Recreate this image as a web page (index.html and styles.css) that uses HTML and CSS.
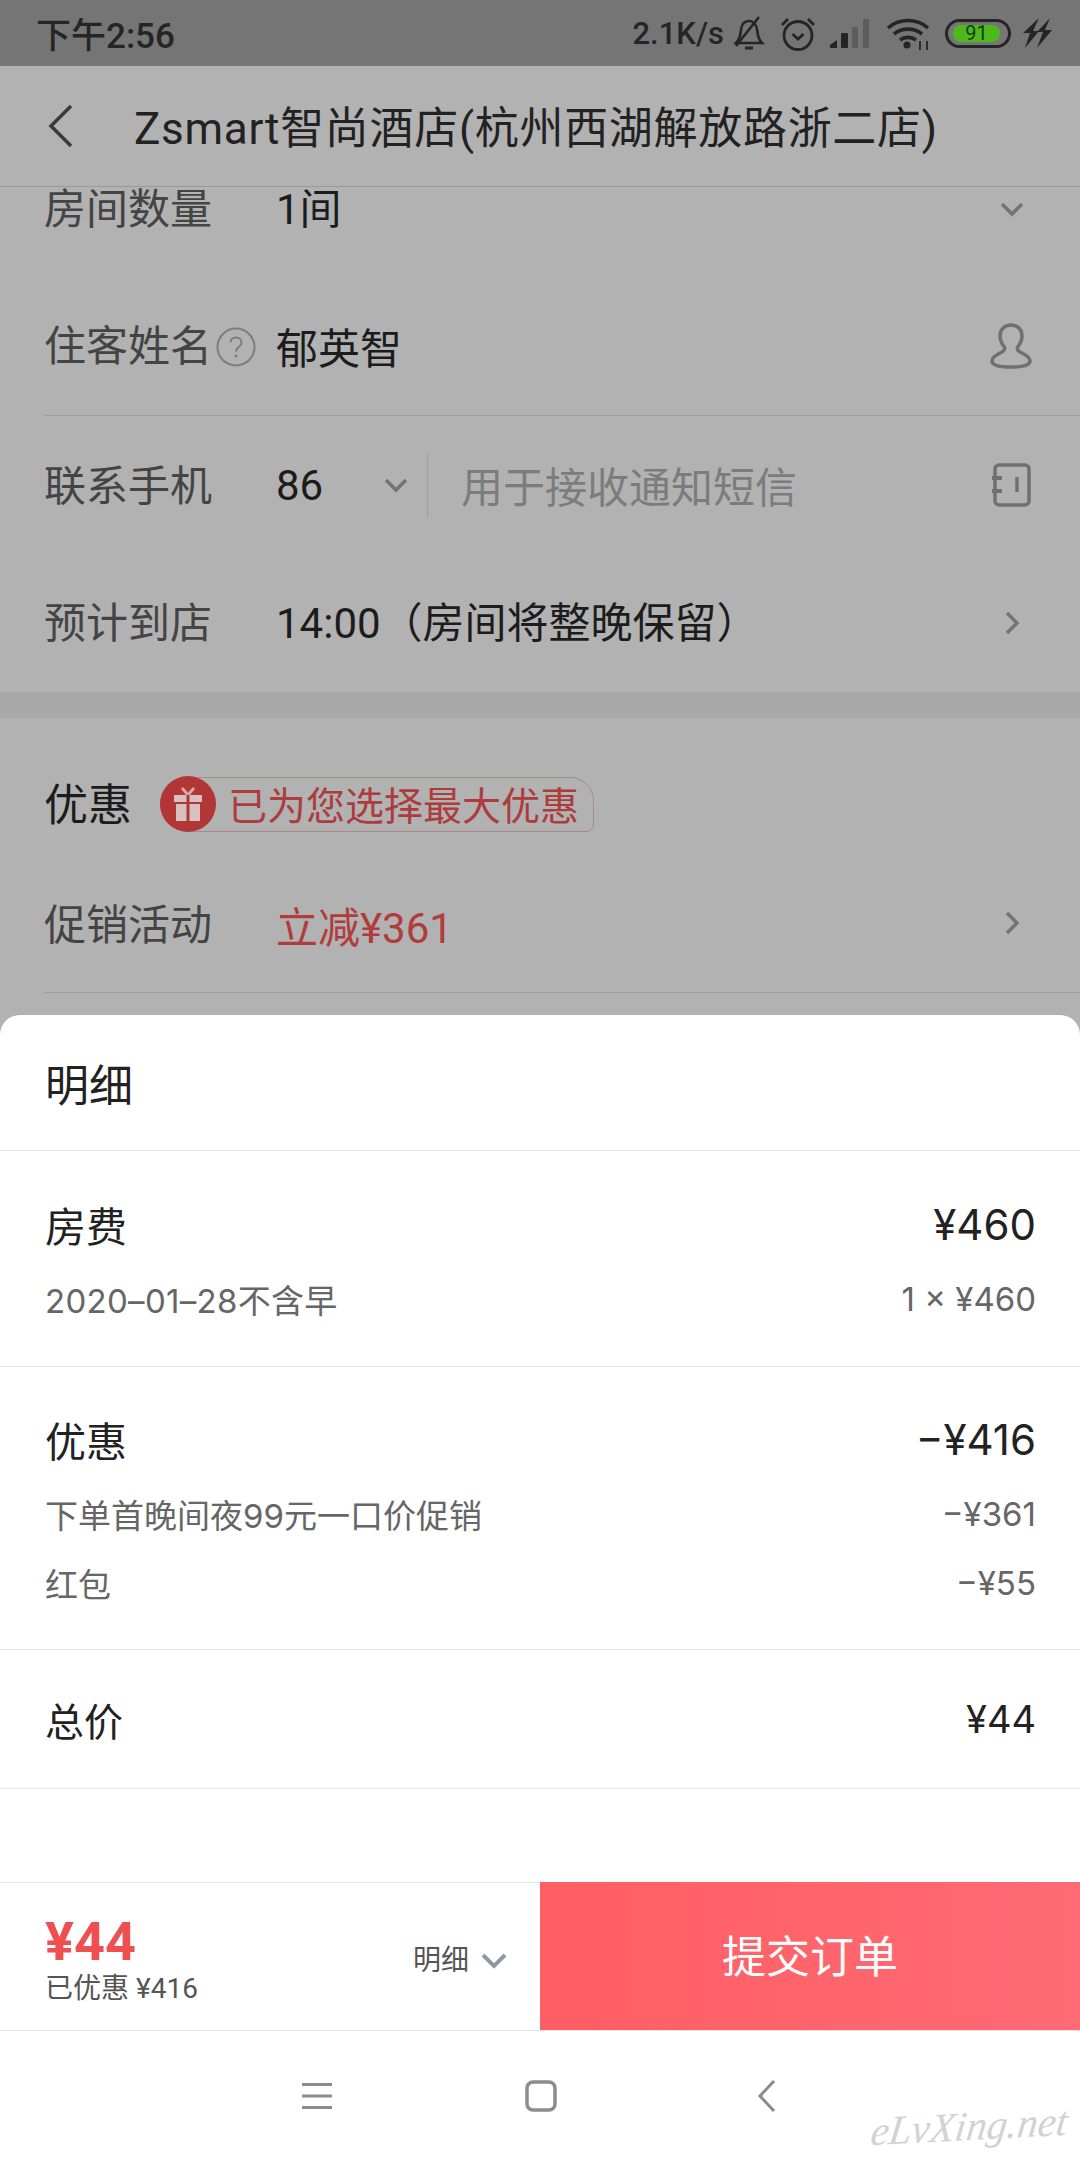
FILE: index.html
```html
<!DOCTYPE html>
<html lang="zh-CN">
<head>
    <meta charset="UTF-8">
    <meta name="viewport" content="width=device-width, initial-scale=1.0">
    <title>提交订单</title>
    <link rel="stylesheet" href="styles.css">
</head>
<body>
    <div class="status-bar">
        <span class="status-time">下午2:56</span>
        <div class="status-icons">
            <span class="status-speed">2.1K/s</span>
            <svg class="ico-bell" width="32" height="34" viewBox="0 0 32 34" fill="none" stroke="#252525" stroke-width="2.6">
                <path d="M3 27h26c-3-3-4-6-4.500-11C24 10 21 5 16 5 11 5 8.500 9 8 14c-.4 5-2 10-5 13z"/>
                <path d="M3 30 26 1"/>
                <path d="M12 32h8" stroke-width="3"/>
            </svg>
            <svg class="ico-alarm" width="36" height="35" viewBox="0 0 36 35" fill="none" stroke="#252525" stroke-width="2.8">
                <circle cx="18" cy="19.500" r="14"/>
                <path d="M12.500 18l5.500 5 5.500-5"/>
                <path d="M2 9l6-6M34 9l-6-6"/>
            </svg>
            <svg class="ico-signal" width="40" height="30" viewBox="0 0 40 30">
                <path d="M0 30v-3l7-5v8z" fill="#252525"/>
                <rect x="11" y="15" width="7" height="15" rx="1" fill="#252525"/>
                <rect x="22" y="9" width="6" height="21" rx="1" fill="#5c5c5c"/>
                <rect x="33" y="1" width="6" height="29" rx="1" fill="#5c5c5c"/>
            </svg>
            <svg class="ico-wifi" width="44" height="33" viewBox="0 0 44 33" fill="none" stroke="#252525" stroke-width="3.600">
                <path d="M2 11c11-10 29-10 40 0"/>
                <path d="M8 17c8-6.500 20-6.500 28 0"/>
                <path d="M14 23c4.500-3.500 11.500-3.500 16 0"/>
                <circle cx="21" cy="28" r="3.500" fill="#252525" stroke="none"/>
                <path d="M34 24v9M41 24v9" stroke-width="1.800"/>
            </svg>
            <div class="battery"><span class="battery-level">91</span></div>
            <svg class="ico-bolt" width="30" height="30" viewBox="0 0 30 30" fill="#252525">
                <path d="M17 0 1 15h7L3 30l14-17h-6zM28 0 15 14h6l-6 16 15-18h-7z"/>
            </svg>
        </div>
    </div>

    <div class="title-bar">
        <svg class="ico-back" width="28" height="44" viewBox="0 0 28 44" fill="none" stroke="#3a3a3a" stroke-width="3.500">
            <path d="M24 2 4 22l20 20"/>
        </svg>
        <h1>Zsmart智尚酒店(杭州西湖解放路浙二店)</h1>
    </div>

    <div class="booking-form">
        <div class="form-group form-group-first">
            <span class="form-label">房间数量</span>
            <span class="form-value">1间</span>
            <svg class="ico-right chevron chevron-down" width="24" height="15" viewBox="0 0 24 15" fill="none"><path d="M2 2l10 10L22 2"/></svg>
        </div>
        <div class="form-group form-group-line">
            <span class="form-label">住客姓名</span>
            <svg class="ico-help" width="40" height="40" viewBox="0 0 40 40" fill="none" stroke="#7d7d7d" stroke-width="2">
                <circle cx="20" cy="20" r="18.500"/>
                <path d="M14.500 15.500c0-3 2.500-5 5.500-5s5.500 2 5.500 5c0 4.500-5.500 4-5.500 9"/>
                <circle cx="20" cy="29" r="1.500" fill="#7d7d7d" stroke="none"/>
            </svg>
            <span class="form-value form-value-name">郁英智</span>
            <svg class="ico-right" width="42" height="48" viewBox="0 0 42 48" fill="none" stroke="#707070" stroke-width="3.500">
                <path d="M21 2c-6.500 0-11 4.500-11 11 0 4 2 8 4 10.500 1.500 2 .5 4-2 5.500C8 31 2 33.500 2 38c0 4 5 6 19 6s19-2 19-6c0-4.500-6-7-10-9-2.500-1.500-3.500-3.500-2-5.500 2-2.500 4-6.500 4-10.500C32 6.500 27.500 2 21 2z"/>
            </svg>
        </div>
        <div class="form-group form-group-phone">
            <span class="form-label">联系手机</span>
            <span class="form-value form-value-code">86</span>
            <svg class="chevron" width="24" height="15" viewBox="0 0 24 15" fill="none"><path d="M2 2l10 10L22 2"/></svg>
            <span class="phone-divider"></span>
            <span class="form-placeholder">用于接收通知短信</span>
            <svg class="ico-right" width="42" height="44" viewBox="0 0 42 44" fill="none" stroke="#707070" stroke-width="3.500">
                <rect x="5" y="2" width="34" height="40" rx="4"/>
                <path d="M27 14v15"/>
                <path d="M2 15h10M2 28h10" stroke-width="4"/>
            </svg>
        </div>
        <div class="form-group">
            <span class="form-label">预计到店</span>
            <span class="form-value">14:00（房间将整晚保留）</span>
            <svg class="ico-right chevron chevron-next" width="15" height="24" viewBox="0 0 15 24" fill="none"><path d="M2 2l10 10L2 22"/></svg>
        </div>

        <div class="section-gap"></div>

        <div class="discount-head">
            <span class="discount-title">优惠</span>
            <div class="discount-tag">
                <span class="gift-badge">
                    <svg width="30" height="34" viewBox="0 0 30 34">
                        <path d="M9 1l6 7 6-7" fill="none" stroke="#d9a6a6" stroke-width="3"/>
                        <rect x="1" y="8" width="28" height="7" fill="#d9c0c0"/>
                        <rect x="3" y="17" width="24" height="17" fill="#d9c0c0"/>
                        <rect x="13.500" y="8" width="3" height="26" fill="#b03636"/>
                    </svg>
                </span>
                <span class="discount-text">已为您选择最大优惠</span>
            </div>
        </div>
        <div class="form-group form-group-line promo-row">
            <span class="form-label">促销活动</span>
            <span class="form-value form-value-red">立减¥361</span>
            <svg class="ico-right chevron" width="15" height="24" viewBox="0 0 15 24" fill="none"><path d="M2 2l10 10L2 22"/></svg>
        </div>
    </div>

    <div class="sheet">
        <div class="sheet-title">明细</div>

        <div class="price-block">
            <div class="price-main"><span>房费</span><span class="amount">¥460</span></div>
            <div class="price-sub"><span class="price-date">2020–01–28不含早</span><span>1 × ¥460</span></div>
        </div>

        <div class="price-block">
            <div class="price-main"><span>优惠</span><span class="amount">−¥416</span></div>
            <div class="price-sub"><span>下单首晚间夜99元一口价促销</span><span>−¥361</span></div>
            <div class="price-sub price-sub-tight"><span>红包</span><span>−¥55</span></div>
        </div>

        <div class="price-total"><span>总价</span><span class="amount-total">¥44</span></div>
    </div>

    <div class="order-bar">
        <div class="order-summary">
            <div class="order-price">
                <div class="order-total">¥44</div>
                <div class="order-saved">已优惠 ¥416</div>
            </div>
            <div class="order-detail">
                <span>明细</span>
                <svg width="26" height="16" viewBox="0 0 26 16" fill="none" stroke="#8e9aa3" stroke-width="4"><path d="M2 2l11 11L24 2"/></svg>
            </div>
        </div>
        <button class="submit-btn" type="button">提交订单</button>
    </div>

    <div class="nav-bar">
        <svg class="nav-menu" width="32" height="28" viewBox="0 0 32 28" fill="#8c8c8c">
            <rect x="1" y="1" width="30" height="3"/>
            <rect x="1" y="12.500" width="30" height="3"/>
            <rect x="1" y="24" width="30" height="3"/>
        </svg>
        <svg class="nav-home" width="32" height="32" viewBox="0 0 32 32" fill="none" stroke="#8c8c8c" stroke-width="3.500"><rect x="2" y="2" width="28" height="28" rx="6"/></svg>
        <svg width="20" height="32" viewBox="0 0 20 32" fill="none" stroke="#8c8c8c" stroke-width="3"><path d="M17 1 3 16l14 15"/></svg>
        <span class="watermark">eLvXing.net</span>
    </div>
</body>
</html>
```

FILE: styles.css
```css
* {
    box-sizing: border-box;
}

html, body {
    margin: 0;
    padding: 0;
}

body {
    position: relative;
    width: 1080px;
    height: 2160px;
    overflow: hidden;
    display: flex;
    flex-direction: column;
    font-family: Roboto, "Noto Sans CJK SC", sans-serif;
    background-color: #b2b2b2;
}

/* status bar */
.status-bar {
    height: 66px;
    padding: 0 28px 0 36px;
    display: flex;
    justify-content: space-between;
    align-items: center;
    background-color: #757575;
    color: #252525;
}

.status-time {
    font-size: 35px;
    font-weight: 500;
    margin-bottom: 2px;
}

.status-icons {
    display: flex;
    align-items: center;
}

.status-speed {
    font-size: 31px;
    font-weight: 500;
    margin-right: 9px;
}

.ico-alarm {
    margin-left: 15px;
}

.ico-signal {
    margin-left: 14px;
}

.ico-wifi {
    margin-left: 16px;
}

.battery {
    width: 66px;
    height: 29px;
    margin-left: 15px;
    padding: 3px 8px 3px 5px;
    border: 3px solid #252525;
    border-radius: 15px;
    display: flex;
}

.battery-level {
    flex: 1;
    border-radius: 8px;
    background-color: #4fb81f;
    color: #14400a;
    font-size: 20px;
    line-height: 17px;
    text-align: center;
}

.ico-bolt {
    margin-left: 11px;
}

/* title */
.title-bar {
    position: relative;
    z-index: 1;
    height: 121px;
    padding-left: 47px;
    display: flex;
    align-items: center;
    background-color: #b2b2b2;
    border-bottom: 1px solid #999;
}

.ico-back {
    margin-right: 59px;
}

h1 {
    margin: 0 0 2px;
    font-size: 44px;
    font-weight: 400;
    letter-spacing: 0.7px;
    color: #222;
    white-space: nowrap;
}

/* form under the dimmed layer */
.booking-form {
    height: 828px;
    overflow: hidden;
}

.form-group {
    height: 138px;
    margin-left: 44px;
    padding-right: 48px;
    display: flex;
    align-items: center;
}

.form-group-first {
    margin-top: -47px;
}

.form-group-line {
    border-bottom: 1px solid #a0a0a0;
    padding-right: 0;
}

.form-group-line .ico-right {
    margin-right: 48px;
}

.form-label {
    width: 232px;
    flex-shrink: 0;
    margin-bottom: 8px;
    font-size: 42px;
    color: #444;
}

.form-value {
    margin-bottom: 8px;
    font-size: 42px;
    color: #1c1c1c;
}

.form-value-name {
    margin-bottom: 3px;
}

.form-group-phone .form-label {
    margin-bottom: 5px;
}

.form-value-code {
    width: 108px;
    margin-bottom: 0;
}

.form-value-red {
    margin-top: 3px;
    margin-bottom: 0;
    color: #b03c3c;
}

.ico-help {
    margin-left: -60px;
    margin-right: 20px;
}

.form-placeholder {
    margin-bottom: 2px;
    font-size: 42px;
    color: #7c7c7c;
}

.phone-divider {
    width: 1px;
    height: 66px;
    margin: 0 33px 0 19px;
    background-color: #a0a0a0;
}

.ico-right {
    margin-left: auto;
}

.chevron path {
    stroke: #737373;
    stroke-width: 3.500;
}

.chevron-down {
    margin-right: 8px;
}

.chevron-next {
    margin-right: 12px;
}

.section-gap {
    height: 26px;
    background-color: #a9a9aa;
}

.discount-head {
    height: 172px;
    margin-left: 44px;
    display: flex;
    align-items: center;
}

.discount-title {
    width: 116px;
    margin-bottom: 5px;
    font-size: 44px;
    color: #1c1c1c;
}

.discount-tag {
    height: 55px;
    width: 434px;
    display: flex;
    align-items: center;
    border: 1px solid #a98888;
    border-radius: 28px 24px 8px 28px;
}

.gift-badge {
    width: 56px;
    height: 56px;
    margin-left: -1px;
    flex-shrink: 0;
    display: flex;
    align-items: center;
    justify-content: center;
    border-radius: 50%;
    background-color: #b23636;
}

.discount-text {
    margin-left: 12px;
    margin-bottom: 2px;
    font-size: 39px;
    color: #ad3c3c;
    white-space: nowrap;
}

.promo-row {
    height: 103px;
    align-items: flex-start;
    padding-top: 1px;
}

.form-group-line.promo-row .ico-right {
    margin-top: 20px;
    margin-right: 60px;
}

/* price breakdown sheet */
.sheet {
    flex: 1;
    background-color: #fff;
    border-radius: 20px 20px 0 0;
}

.sheet-title {
    height: 136px;
    padding-left: 45px;
    display: flex;
    align-items: center;
    font-size: 44px;
    color: #222;
    border-bottom: 1px solid #e6e6e6;
}

.price-block {
    padding: 43px 44px 42px 45px;
    border-bottom: 1px solid #e6e6e6;
}

.price-block + .price-block {
    padding-top: 42px;
    padding-bottom: 41px;
}

.price-main,
.price-sub,
.price-total {
    display: flex;
    justify-content: space-between;
    align-items: center;
}

.price-main {
    height: 60px;
    font-size: 41px;
    color: #222;
}

.amount {
    font-family: Inter, "Noto Sans CJK SC", sans-serif;
    font-size: 42px;
}

.price-sub {
    height: 50px;
    margin-top: 20px;
    font-family: Inter, "Noto Sans CJK SC", sans-serif;
    font-size: 33px;
    color: #666;
}

.price-date {
    letter-spacing: 0.3px;
}

.price-sub-tight {
    margin-top: 19px;
}

.price-total {
    height: 139px;
    padding: 0 44px 0 45px;
    font-size: 39px;
    color: #222;
    border-bottom: 1px solid #e6e6e6;
}

.amount-total {
    font-family: Inter, "Noto Sans CJK SC", sans-serif;
    font-size: 38px;
}

/* order bar and navigation */
.order-bar {
    height: 149px;
    flex-shrink: 0;
    display: flex;
    background-color: #fff;
    border-bottom: 1px solid #e6e6e6;
}

.order-summary {
    width: 540px;
    padding: 3px 33px 0 45px;
    display: flex;
    justify-content: space-between;
    align-items: center;
    border-top: 1px solid #e6e6e6;
}

.order-total {
    font-size: 54px;
    line-height: 60px;
    font-weight: 700;
    color: #f04f4f;
}

.order-saved {
    font-size: 28px;
    line-height: 33px;
    color: #555;
}

.order-detail {
    display: flex;
    align-items: center;
    gap: 12px;
    font-size: 28px;
    color: #555;
}

.order-detail svg {
    margin-top: 6px;
}

.submit-btn {
    width: 540px;
    padding: 0 0 4px;
    border: none;
    background: linear-gradient(90deg, #ff5e62, #ff6a75);
    color: #fff;
    font-family: inherit;
    font-size: 44px;
}

.nav-bar {
    position: relative;
    height: 129px;
    flex-shrink: 0;
    padding-left: 301px;
    display: flex;
    align-items: center;
    background-color: #fff;
}

.nav-menu {
    margin-right: 192px;
}

.nav-home {
    margin-right: 200px;
}

.watermark {
    position: absolute;
    right: 12px;
    bottom: 10px;
    font-family: "Liberation Serif", serif;
    font-style: italic;
    font-size: 41px;
    color: #d2d2d2;
    transform: rotate(-3deg) skewX(-10deg);
}
```
